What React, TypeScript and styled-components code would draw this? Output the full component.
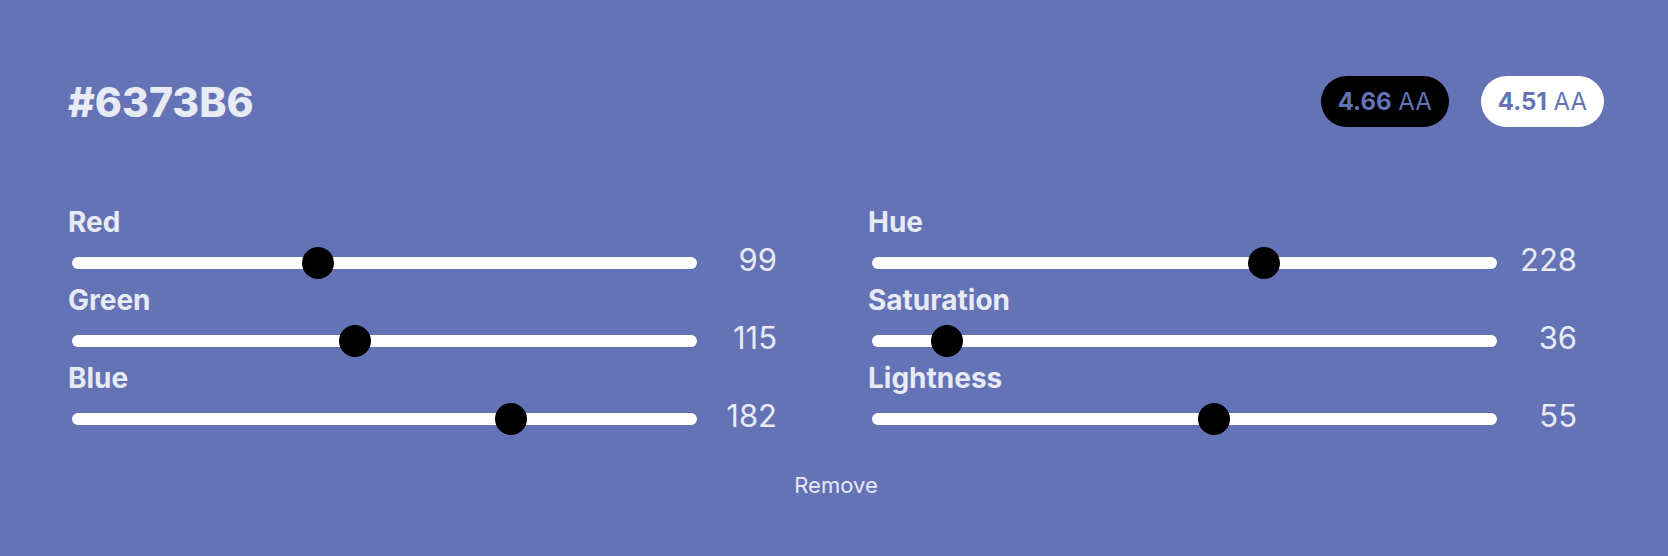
import { createGlobalStyle, styled } from 'styled-components';

const BASE = '#6373B6';

const rgb = [
  { label: 'Red', value: 99, max: 255 },
  { label: 'Green', value: 115, max: 255 },
  { label: 'Blue', value: 182, max: 255 },
];

// saturation slider shares hue's 0-360 range, as in the original
const hsl = [
  { label: 'Hue', value: 228, max: 360 },
  { label: 'Saturation', value: 36, max: 360 },
  { label: 'Lightness', value: 55, max: 100 },
];

type Channel = { label: string; value: number; max: number };

function Slider({ label, value, max }: Channel) {
  return (
    <Block>
      <Label>{label}</Label>
      <Row>
        <Range type="range" min={0} max={max} defaultValue={value} />
        <Value>{value}</Value>
      </Row>
    </Block>
  );
}

export default function App() {
  return (
    <>
      <GlobalStyle />
      <Card>
        <Header>
          <Hex>#6373B6</Hex>
          <Badges>
            <Badge $dark>
              <strong>4.66</strong> AA
            </Badge>
            <Badge>
              <strong>4.51</strong> AA
            </Badge>
          </Badges>
        </Header>
        <Columns>
          <Column>
            {rgb.map((c) => (
              <Slider key={c.label} {...c} />
            ))}
          </Column>
          <Column>
            {hsl.map((c) => (
              <Slider key={c.label} {...c} />
            ))}
          </Column>
        </Columns>
        <Footer>
          <RemoveButton>Remove</RemoveButton>
        </Footer>
      </Card>
    </>
  );
}

const GlobalStyle = createGlobalStyle`
  html, body {
    margin: 0;
    background: ${BASE};
  }
  body {
    font-family: Inter, 'Noto Sans', sans-serif;
    color: #e8eaf4;
  }
`;

const Card = styled.div`
  display: flex;
  flex-direction: column;
  min-height: 556px;
  box-sizing: border-box;
  padding: 76px 64px 0 68px;
  background: ${BASE};
`;

const Header = styled.div`
  display: flex;
  align-items: center;
  justify-content: space-between;
  height: 51px;
`;

const Hex = styled.h1`
  margin: 0;
  font-size: 41px;
  font-weight: 800;
  color: #e8eaf4;
`;

const Badges = styled.div`
  display: flex;
  gap: 32px;
`;

const Badge = styled.div<{ $dark?: boolean }>`
  padding: 11px 17px;
  border-radius: 999px;
  font-size: 24px;
  line-height: 29px;
  font-weight: 400;
  color: ${BASE};
  background: ${(p) => (p.$dark ? '#000' : '#fff')};

  strong {
    font-weight: 700;
  }
`;

const Columns = styled.div`
  display: grid;
  grid-template-columns: 736px 736px;
  column-gap: 64px;
  margin-top: 81px;
`;

const Column = styled.div`
  display: flex;
  flex-direction: column;
  gap: 7px;
`;

const Block = styled.div`
  display: flex;
  flex-direction: column;
  gap: 10px;
`;

const Label = styled.div`
  font-size: 28px;
  line-height: 29px;
  font-weight: 700;
`;

const Row = styled.div`
  display: grid;
  grid-template-columns: 625px 80px;
  align-items: center;
  height: 32px;
  padding-left: 4px;
`;

const Range = styled.input`
  -webkit-appearance: none;
  appearance: none;
  width: 100%;
  height: 32px;
  margin: 0;
  background: transparent;

  &::-webkit-slider-runnable-track {
    height: 12px;
    border-radius: 6px;
    background: #fff;
  }

  &::-webkit-slider-thumb {
    -webkit-appearance: none;
    width: 32px;
    height: 32px;
    margin-top: -10px;
    border: none;
    border-radius: 50%;
    background: #000;
  }
`;

const Value = styled.div`
  font-size: 31px;
  line-height: 32px;
  text-align: right;
  margin-top: -7px;
`;

const Footer = styled.div`
  display: flex;
  justify-content: center;
  margin-top: 38px;
`;

const RemoveButton = styled.button`
  border: none;
  background: none;
  padding: 0;
  font-family: inherit;
  font-size: 22px;
  line-height: 25px;
  color: #e8eaf4;
  cursor: pointer;
`;
